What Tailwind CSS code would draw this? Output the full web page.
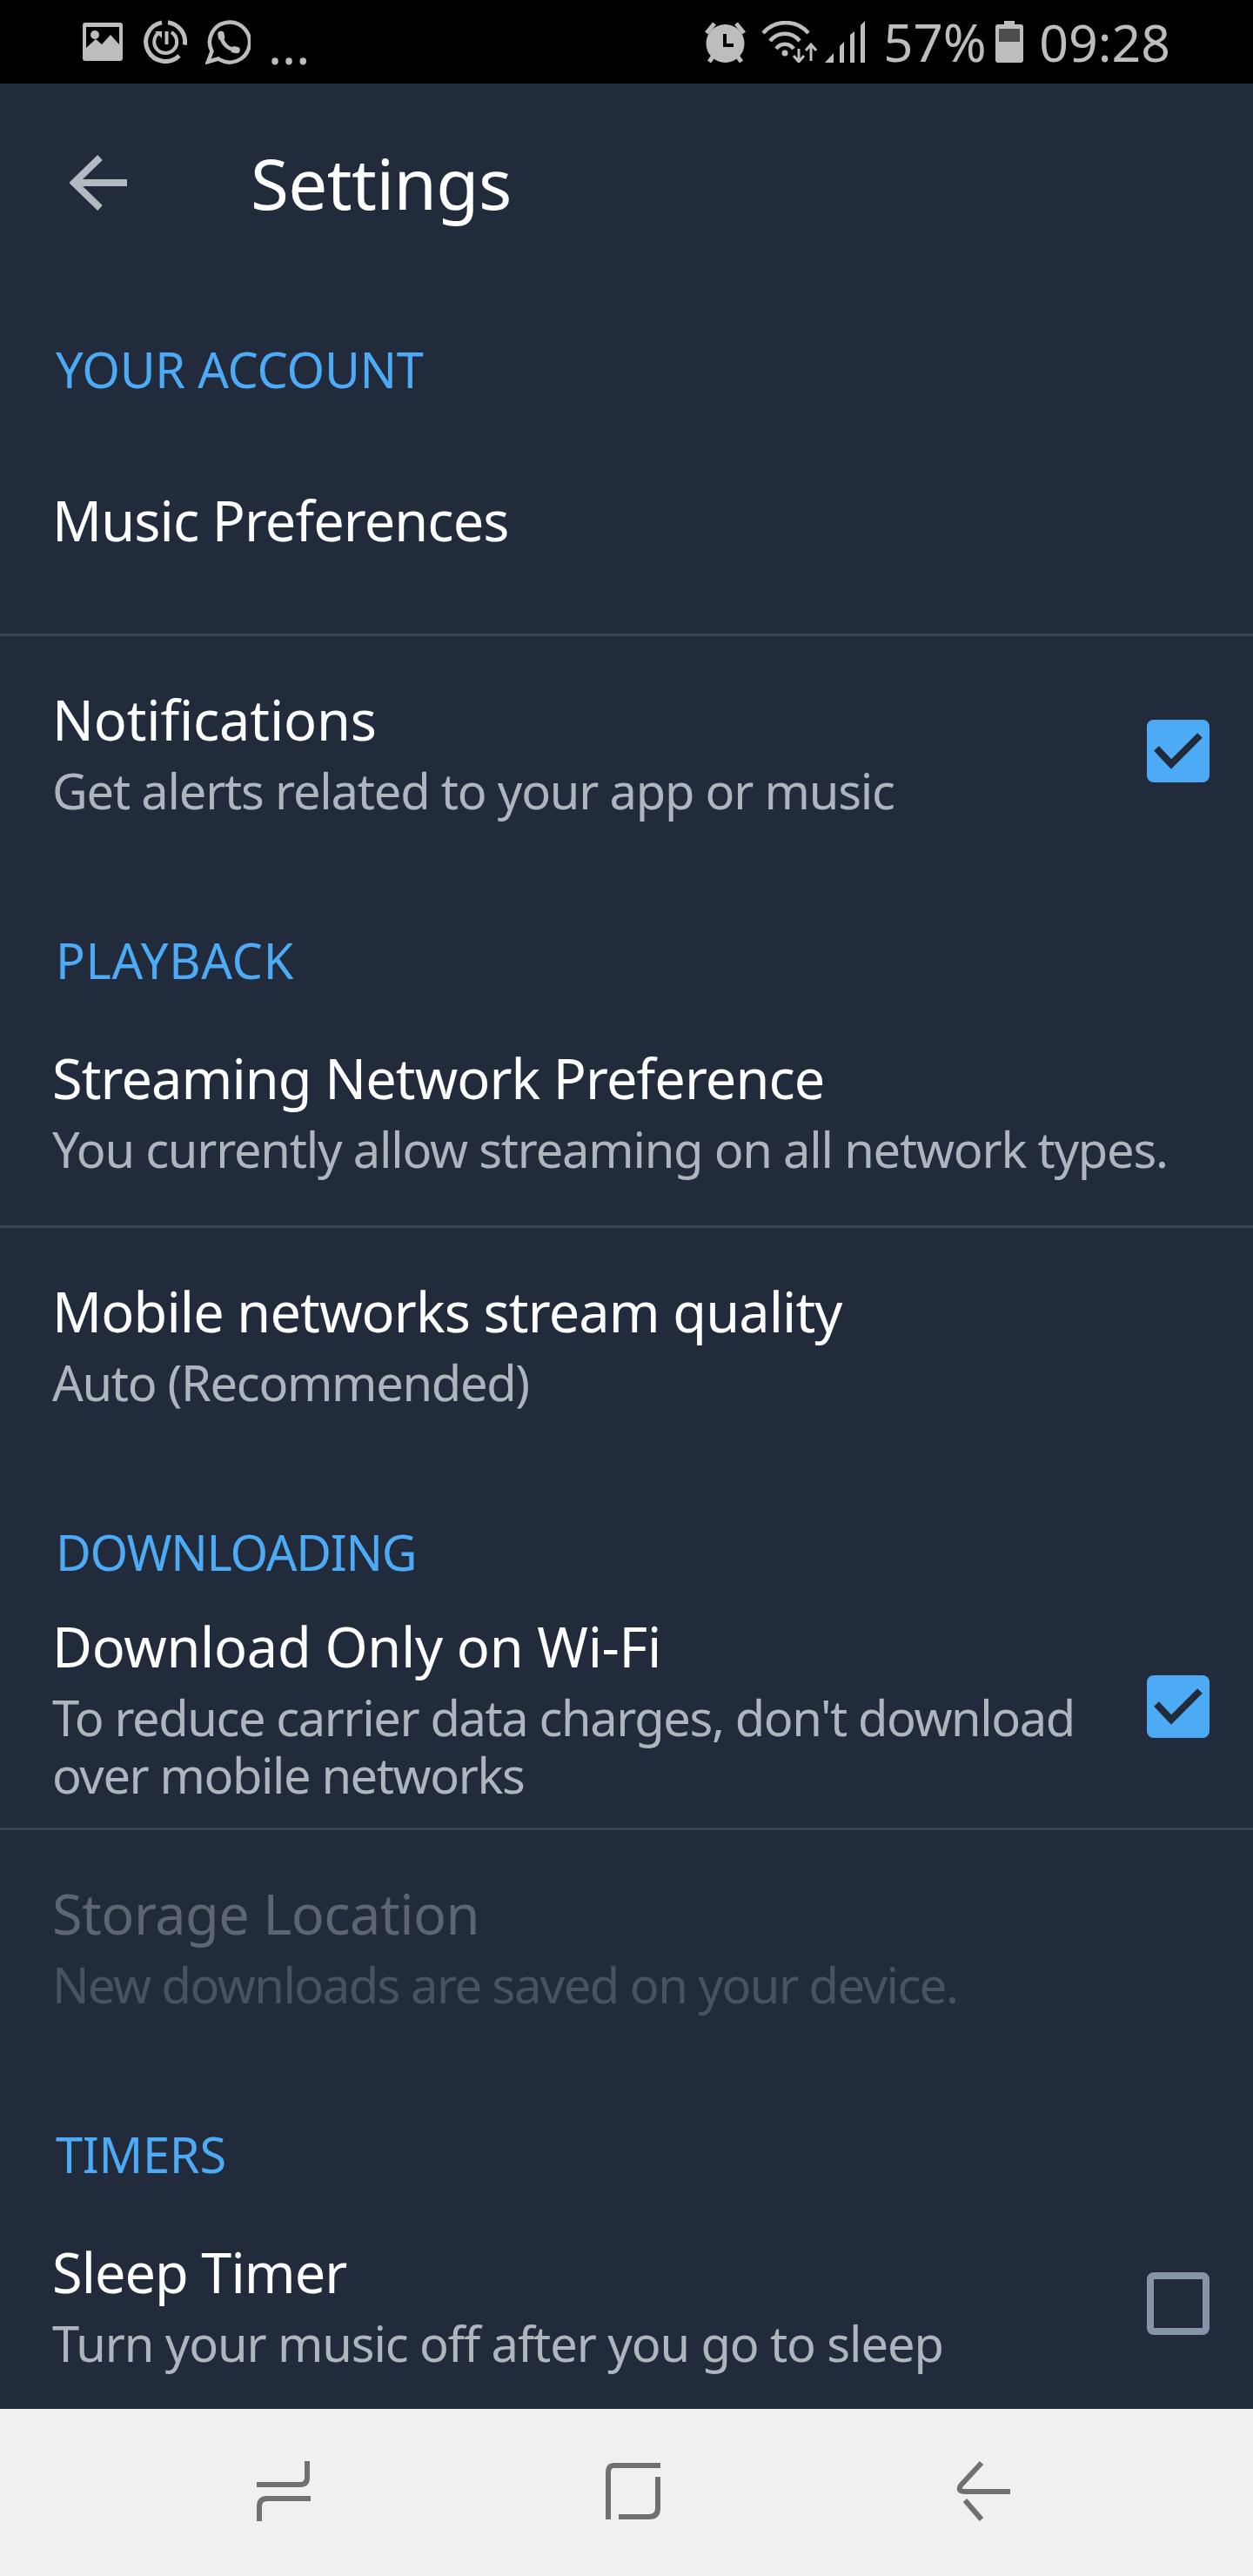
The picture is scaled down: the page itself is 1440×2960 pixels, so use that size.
<!doctype html>
<html lang="en">
<head>
<meta charset="utf-8">
<script src="https://cdn.jsdelivr.net/npm/@tailwindcss/browser@4"></script>
<title>Settings</title>
</head>
<body class="m-0">
<div class="w-[1440px] h-[2960px] flex flex-col overflow-hidden bg-[#222b3c] font-['Noto_Sans',sans-serif] text-white">
  <!-- status bar -->
  <div class="h-[96px] shrink-0 bg-black flex items-center text-[#bdbdbd] pl-[95px]">
    <svg class="w-[46px] h-[44px]" viewBox="0 0 46 44"><path fill="#bdbdbd" fill-rule="evenodd" d="M3 0H43a3 3 0 0 1 3 3V41a3 3 0 0 1-3 3H3a3 3 0 0 1-3-3V3A3 3 0 0 1 3 0ZM4 5V29L15 19 22 25 32 14 42 25V5Z"/><circle cx="14" cy="14" r="5" fill="#bdbdbd"/></svg>
    <svg class="w-[50px] h-[50px] ml-[24px]" viewBox="0 0 50 50" fill="none" stroke="#bdbdbd"><path stroke-width="5" d="M28 2.7A22.5 22.5 0 0 1 47.3 28.5M41 41A22.5 22.5 0 1 1 21 2.9"/><path stroke-width="4" d="M32 14A13 13 0 1 1 17 15"/><path stroke-width="4" d="M26.5 13V28"/><path fill="#bdbdbd" stroke="none" d="M13 13H21V21Z"/></svg>
    <svg class="w-[52px] h-[52px] ml-[21px]" viewBox="0 0 52 52" fill="none" stroke="#bdbdbd"><path stroke-width="4.5" d="M3 49L7.500 37A23 23 0 1 1 15 45.500Z"/><path stroke-width="4.500" d="M18.500 19C18.500 27 26 35 34.500 35"/><path stroke-width="7.500" stroke-linecap="round" d="M18 17.500L18.500 20.500M33 35L36 35.500"/></svg>
    <span class="ml-[20px] text-[60px] leading-[60px] self-center mt-[6px]">...</span>
    <div class="ml-auto flex items-center pr-[95px]">
      <svg class="w-[47px] h-[48px]" viewBox="0 0 47 48"><path stroke="#bdbdbd" stroke-width="5" d="M2 14L11 3M45 14L36 3M10 40L5 47M37 40L42 47"/><circle cx="23.500" cy="26" r="22" fill="#bdbdbd"/><path fill="none" stroke="#000" stroke-width="4" d="M23 15V28H33"/></svg>
      <svg class="w-[64px] h-[48px] ml-[18px]" viewBox="0 0 64 48" fill="none" stroke="#bdbdbd"><path stroke-width="4.500" d="M2 14C16 -2 40 -2 54 14M10 23C19 12 35 12 44 23M17 32C22 25 32 25 37 32"/><circle cx="27" cy="37" r="3.500" fill="#bdbdbd" stroke="none"/><path stroke-width="3" d="M43 32V46M37 40L43 47 49 40M57 46V28M51 34L57 27 63 34"/></svg>
      <svg class="w-[47px] h-[48px] ml-[9px]" viewBox="0 0 47 48" fill="#bdbdbd"><path d="M0 48L10 37V48ZM17 48V29L22 24V48ZM29 48V16L34 12V48ZM41 48V5L46 0V48Z"/></svg>
      <span class="ml-[20px] w-[116px] text-[60px] leading-[60px] whitespace-nowrap">57%</span>
      <svg class="w-[32px] h-[48px] ml-[13px]" viewBox="0 0 32 48"><path fill="#bdbdbd" d="M10 0H22V4H29a3 3 0 0 1 3 3V45a3 3 0 0 1-3 3H3a3 3 0 0 1-3-3V7a3 3 0 0 1 3-3H10Z"/><rect x="4" y="9" width="24" height="15" fill="#4d4d4d"/></svg>
      <span class="ml-[18px] text-[59px] leading-[60px] whitespace-nowrap">09:28</span>
    </div>
  </div>

  <!-- toolbar -->
  <div class="h-[228px] shrink-0 flex items-center pl-[80px]">
    <svg class="w-[66px] h-[64px]" viewBox="0 0 66 64" fill="none" stroke="#b5bac2" stroke-width="8"><path d="M66 32H6M35 3L5 32 35 61" stroke-linejoin="miter"/></svg>
    <h1 class="ml-[142px] text-[80px] leading-[90px] font-normal tracking-[-0.6px]">Settings</h1>
  </div>

  <!-- your account -->
  <div class="mt-[68px] h-[66px] pl-[64px] text-[56px] leading-[64px] text-[#4dabf5] tracking-[-0.3px]">YOUR ACCOUNT</div>
  <div class="h-[273px] pl-[60px] pt-[10px] flex items-center border-b-[3px] border-[#3b4454]">
    <div class="text-[63px] leading-[66px] tracking-[-0.9px]">Music Preferences</div>
  </div>

  <!-- notifications -->
  <div class="pl-[60px] pr-[50px] pt-[63px] pb-[129px] flex justify-between items-start">
    <div>
      <div class="text-[63px] leading-[66px] mb-[15px] tracking-[-0.15px]">Notifications</div>
      <div class="text-[56px] leading-[66px] text-[#b0b5bd] tracking-[-1.2px]">Get alerts related to your app or music</div>
    </div>
    <div class="w-[72px] h-[72px] mt-[33px] rounded-[8px] bg-[#4dabf5]">
      <svg class="w-[72px] h-[72px]" viewBox="0 0 72 72" fill="none" stroke="#222b3c" stroke-width="8"><path d="M11 33L28 51 61 18"/></svg>
    </div>
  </div>

  <!-- playback -->
  <div class="h-[66px] pl-[64px] text-[56px] leading-[66px] text-[#4dabf5] tracking-[0.7px]">PLAYBACK</div>
  <div class="pl-[60px] pr-[50px] pt-[70px] pb-[55px] border-b-[3px] border-[#3b4454]">
    <div class="text-[63px] leading-[66px] mb-[15px] tracking-[-0.9px]">Streaming Network Preference</div>
    <div class="text-[56px] leading-[66px] text-[#b0b5bd] tracking-[-1.2px] whitespace-nowrap">You currently allow streaming on all network types.</div>
  </div>
  <div class="pl-[60px] pr-[50px] pt-[63px] pb-[128px]">
    <div class="text-[63px] leading-[66px] mb-[15px] tracking-[-0.87px]">Mobile networks stream quality</div>
    <div class="text-[56px] leading-[66px] text-[#b0b5bd] tracking-[-1.3px]">Auto (Recommended)</div>
  </div>

  <!-- downloading -->
  <div class="h-[66px] pl-[64px] text-[56px] leading-[68px] text-[#4dabf5] tracking-[-1.3px]">DOWNLOADING</div>
  <div class="pl-[60px] pr-[50px] pt-[44px] pb-[28px] flex justify-between items-start border-b-[3px] border-[#3b4454]">
    <div>
      <div class="text-[63px] leading-[66px] mb-[15px] tracking-[-0.3px]">Download Only on Wi-Fi</div>
      <div class="text-[56px] leading-[66px] text-[#b0b5bd] tracking-[-1.4px] whitespace-nowrap">To reduce carrier data charges, don't download<br>over mobile networks</div>
    </div>
    <div class="w-[72px] h-[72px] mt-[66px] rounded-[8px] bg-[#4dabf5]">
      <svg class="w-[72px] h-[72px]" viewBox="0 0 72 72" fill="none" stroke="#222b3c" stroke-width="8"><path d="M11 33L28 51 61 18"/></svg>
    </div>
  </div>
  <div class="pl-[60px] pr-[50px] pt-[63px] pb-[129px]">
    <div class="text-[63px] leading-[66px] mb-[15px] tracking-[-0.5px] text-[#5e6570]">Storage Location</div>
    <div class="text-[56px] leading-[66px] text-[#4a5261] tracking-[-1.5px]">New downloads are saved on your device.</div>
  </div>

  <!-- timers -->
  <div class="h-[66px] pl-[64px] text-[56px] leading-[66px] text-[#4dabf5] tracking-[-0.3px]">TIMERS</div>
  <div class="pl-[60px] pr-[50px] pt-[70px] flex justify-between items-start">
    <div>
      <div class="text-[63px] leading-[66px] mb-[15px] tracking-[-0.95px]">Sleep Timer</div>
      <div class="text-[56px] leading-[66px] text-[#b0b5bd] tracking-[-1.1px]">Turn your music off after you go to sleep</div>
    </div>
    <div class="w-[72px] h-[72px] mt-[33px] rounded-[8px] border-[8px] border-[#8793a8]"></div>
  </div>

  <!-- nav bar -->
  <div class="mt-auto h-[192px] shrink-0 bg-[#f0f0f0] flex items-start justify-center gap-[339px] pl-[16px] pt-[59px]">
    <svg class="w-[64px] h-[70px]" viewBox="0 0 64 70" fill="none" stroke="#707070" stroke-width="6"><path d="M60 1V20Q60 28 52 28H2M64 44H14Q5 44 5 53V70"/></svg>
    <svg class="w-[64px] h-[70px]" viewBox="0 0 64 70" fill="none" stroke="#707070" stroke-width="6"><path d="M63 6H10Q3 6 3 14V68M60 19V55Q60 65 50 65H15"/></svg>
    <svg class="w-[64px] h-[70px]" viewBox="0 0 64 70" fill="none" stroke="#707070" stroke-width="6"><path d="M29 3L5 29Q1 36 10 36H62M10 46L29 68"/></svg>
  </div>
</div>
</body>
</html>
